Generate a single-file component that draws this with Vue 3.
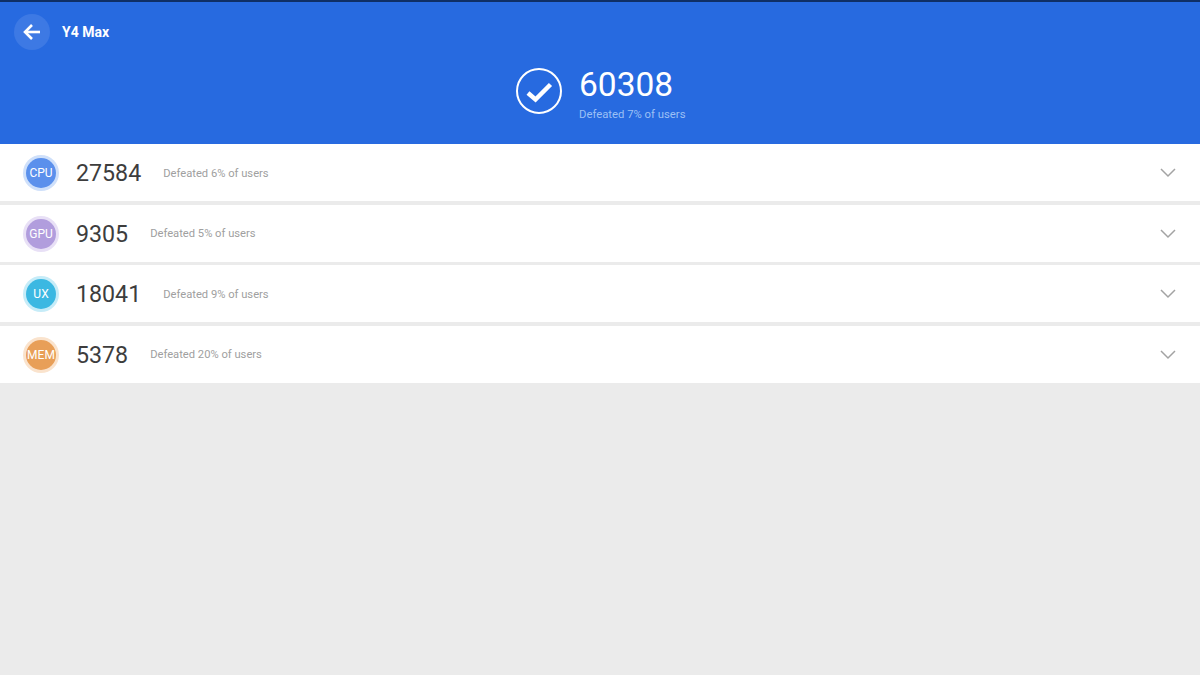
<script setup>
const rows = [
  { key: 'cpu', label: 'CPU', score: '27584', note: 'Defeated 6% of users' },
  { key: 'gpu', label: 'GPU', score: '9305', note: 'Defeated 5% of users' },
  { key: 'ux', label: 'UX', score: '18041', note: 'Defeated 9% of users' },
  { key: 'mem', label: 'MEM', score: '5378', note: 'Defeated 20% of users' }
]
</script>

<template>
  <div class="page">
    <header class="top">
      <div class="title-bar">
        <div class="back">
          <svg width="20" height="20" viewBox="0 0 20 20" fill="none" stroke="#fff" stroke-width="2.6">
            <path d="M18 10H3" />
            <path d="M10 3L3 10l7 7" />
          </svg>
        </div>
        <span class="device">Y4 Max</span>
      </div>
      <div class="total">
        <svg class="check" width="46" height="46" viewBox="0 0 46 46" fill="none" stroke="#fff">
          <circle cx="23" cy="23" r="22" stroke-width="2" />
          <path d="M12 25l7.500 6.500L34.500 16.500" stroke-width="4.500" />
        </svg>
        <div class="total-text">
          <div class="total-score">60308</div>
          <div class="total-note">Defeated 7% of users</div>
        </div>
      </div>
    </header>

    <div class="list">
      <div v-for="row in rows" :key="row.key" class="row">
        <div class="badge" :class="row.key">{{ row.label }}</div>
        <span class="score">{{ row.score }}</span>
        <span class="note">{{ row.note }}</span>
        <svg class="chevron" width="16" height="10" viewBox="0 0 16 10" fill="none" stroke="#a3a3a3" stroke-width="1.500">
          <path d="M1 1l7 7 7-7" />
        </svg>
      </div>
    </div>
  </div>
</template>

<style scoped>
.page {
  width: 1200px;
  height: 675px;
  overflow: hidden;
  background: #ebebeb;
  font-family: Roboto, "Liberation Sans", sans-serif;
}
.top {
  height: 144px;
  box-sizing: border-box;
  background: #276ae0;
  border-top: 2px solid #0f2f66;
  color: #fff;
}
.title-bar {
  display: flex;
  align-items: center;
  height: 60px;
  padding-left: 14px;
}
.back {
  width: 36px;
  height: 36px;
  border-radius: 50%;
  background: #3d79e4;
  display: flex;
  align-items: center;
  justify-content: center;
}
.device {
  margin-left: 12px;
  font-size: 14px;
  font-weight: 700;
}
.total {
  display: flex;
  align-items: center;
  justify-content: center;
  margin-top: 3px;
  padding-left: 1px;
}
.check {
  margin-right: 17.500px;
  margin-top: -6px;
}
.total-score {
  font-size: 33.500px;
  line-height: 40px;
}
.total-note {
  font-size: 11.300px;
  line-height: 16px;
  color: #9cc0f5;
  margin-top: 2px;
}
.row {
  display: flex;
  align-items: center;
  box-sizing: border-box;
  height: 57px;
  margin-bottom: 3.67px;
  background: #fff;
  padding: 1px 24px 0;
}
.badge {
  width: 30px;
  height: 30px;
  border-radius: 50%;
  margin-right: 20px;
  flex: none;
  color: #fff;
  font-size: 12px;
  text-align: center;
  line-height: 30px;
  margin-left: 2px;
}
.cpu {
  background: #5b90ec;
  box-shadow: 0 0 0 3px #cfe0fa;
}
.gpu {
  background: #b19ddd;
  box-shadow: 0 0 0 3px #e8e0f6;
}
.ux {
  background: #3bb8e2;
  box-shadow: 0 0 0 3px #c6ecf8;
}
.mem {
  background: #e89f58;
  box-shadow: 0 0 0 3px #fae3cd;
}
.score {
  font-size: 23.200px;
  color: #3d3d3d;
  margin-right: 22px;
}
.note {
  font-size: 11.200px;
  color: #a0a0a0;
}
.chevron {
  margin-left: auto;
}
</style>

<style>
html, body {
  margin: 0;
  background: #ebebeb;
}
</style>
